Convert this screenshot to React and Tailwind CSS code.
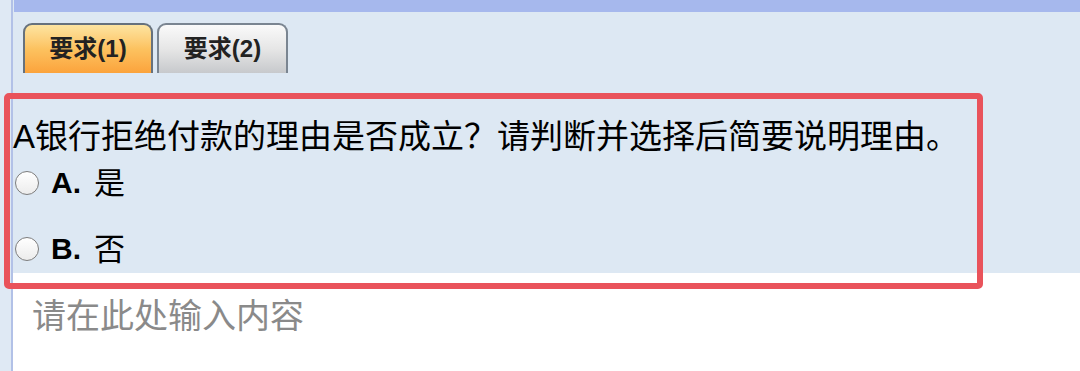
export default function App() {
  const font = { fontFamily: '"Liberation Sans", "Noto Sans CJK SC", sans-serif' }

  return (
    <div
      className="relative flex w-[1080px] h-[371px] overflow-hidden bg-white text-black"
      style={font}
    >
      {/* left rail */}
      <div className="w-[11px] shrink-0 bg-[#dfe9f4]" />
      <div className="w-[2px] shrink-0 bg-[#b2c1e7]" />

      <div className="flex-1 flex flex-col min-w-0">
        {/* light blue question panel */}
        <div className="h-[273px] shrink-0 bg-[#dde8f3] flex flex-col">
          <div className="h-[12px] ml-[1px] bg-[#a6b8ed]" />

          {/* tabs */}
          <div className="flex gap-[4px] pt-[11px] pl-[10px]">
            <div className="w-[130px] h-[50px] flex items-center justify-center rounded-t-[9px] border-2 border-b-0 border-[#66717d] bg-gradient-to-b from-[#fde4a0] via-[#fcc25f] to-[#fba33b] text-[24px] font-bold text-[#222]">
              要求(1)
            </div>
            <div className="w-[131px] h-[50px] flex items-center justify-center rounded-t-[9px] border-2 border-b-0 border-[#7a8591] bg-gradient-to-b from-[#fafafa] via-[#e6e6e6] to-[#c7c9cc] text-[24px] font-bold text-[#222]">
              要求(2)
            </div>
          </div>

          {/* question */}
          <div className="mt-[44px] text-[33px] leading-[40px] whitespace-nowrap">
            A银行拒绝付款的理由是否成立？请判断并选择后简要说明理由。
          </div>

          <div className="mt-[6px] flex flex-col gap-[26px] pl-[2px]">
            {[
              ['A.', '是'],
              ['B.', '否'],
            ].map(([k, v]) => (
              <label key={k} className="h-[40px] flex items-center">
                <span className="w-[24px] h-[24px] rounded-full border-[1.5px] border-[#7d7d7d] bg-gradient-to-b from-white to-[#ececec]" />
                <span className="ml-[12px] text-[30px] font-bold leading-none">{k}</span>
                <span className="ml-[13px] text-[31px] leading-none">{v}</span>
              </label>
            ))}
          </div>
        </div>

        {/* answer input */}
        <div className="flex-1 pl-[19px] pt-[21px]">
          <div className="text-[34px] leading-[44px] text-[#8a8a8a]">请在此处输入内容</div>
        </div>
      </div>

      {/* red highlight annotation */}
      <div className="absolute left-[4px] top-[93px] w-[979px] h-[196px] border-[6px] border-[#e9535b] rounded-[5px] pointer-events-none" />
    </div>
  )
}
